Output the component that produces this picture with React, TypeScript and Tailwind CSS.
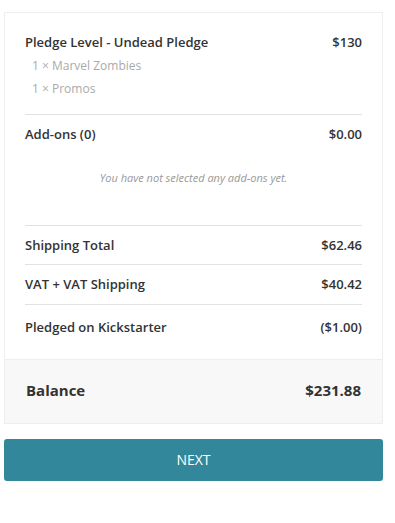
import React from 'react';

interface Line {
  label: string;
  amount: string;
}

const totals: Line[] = [
  { label: 'Shipping Total', amount: '$62.46' },
  { label: 'VAT + VAT Shipping', amount: '$40.42' },
];

export default function App() {
  return (
    <div className="min-h-screen bg-white pt-[12px] px-[4px] font-['Open_Sans',sans-serif] text-[#333]">
      <div className="w-[379px] border border-[#eee]">
        <div className="px-[20px]">
          {/* Pledge level */}
          <div className="pt-[19px] pb-[14px] border-b border-[#e2e2e2]">
            <div className="flex justify-between text-[13px] leading-[20px] font-semibold">
              <span>Pledge Level - Undead Pledge</span>
              <span>$130</span>
            </div>
            <div className="mt-[2px] pl-[7px] text-[12px] text-[#aaa]">
              <div className="leading-[23px]">1 × Marvel Zombies</div>
              <div className="leading-[23px]">1 × Promos</div>
            </div>
          </div>

          {/* Add-ons */}
          <div className="pt-[9px] pb-[39px] border-b border-[#e2e2e2]">
            <div className="flex justify-between text-[13px] leading-[20px] font-semibold">
              <span>Add-ons (0)</span>
              <span>$0.00</span>
            </div>
            <p className="mt-[26px] text-center italic text-[11px] leading-[16px] text-[#999]">
              You have not selected any add-ons yet.
            </p>
          </div>

          {totals.map((t, i) => (
            <div
              key={t.label}
              className={`flex justify-between text-[13px] leading-[20px] font-semibold border-b border-[#e2e2e2] pt-[9px] ${i === 0 ? 'pb-[9px]' : 'pb-[10px]'}`}
            >
              <span>{t.label}</span>
              <span>{t.amount}</span>
            </div>
          ))}

          <div className="flex justify-between text-[13px] leading-[20px] font-semibold pt-[12px] pb-[22px]">
            <span>Pledged on Kickstarter</span>
            <span>($1.00)</span>
          </div>
        </div>

        {/* Balance */}
        <div className="bg-[#f8f8f8] border-t border-[#eee] px-[21px] pt-[18px] pb-[21px] flex justify-between text-[15px] leading-[24px] font-bold">
          <span>Balance</span>
          <span>$231.88</span>
        </div>
      </div>

      <button className="mt-[15px] w-[379px] h-[42px] pb-[2px] rounded-[3px] bg-[#32889a] text-white text-[14px] uppercase">
        Next
      </button>
    </div>
  );
}
